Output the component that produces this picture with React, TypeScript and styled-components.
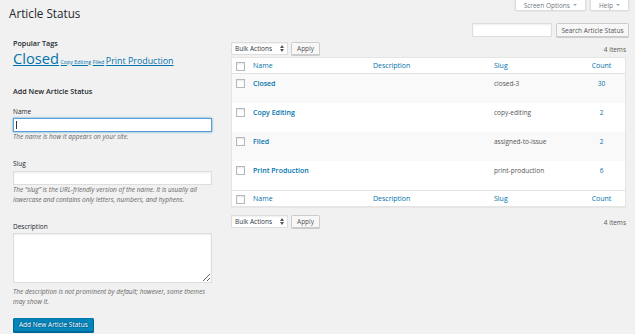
import React from 'react'
import styled, { createGlobalStyle } from 'styled-components'

const GlobalStyle = createGlobalStyle`
  html, body {
    margin: 0;
    padding: 0;
    background: #f1f1f1;
  }
  body {
    width: 635px;
    height: 334px;
    overflow: hidden;
    font-family: "Open Sans", "Liberation Sans", sans-serif;
    font-size: 6.5px;
    line-height: 10px;
    color: #444;
  }
  * {
    box-sizing: border-box;
  }
`

const Wrap = styled.div`
  padding: 0 6px 0 9px;
`

const Header = styled.div`
  display: flex;
  justify-content: space-between;
  align-items: flex-start;
  height: 23px;
`

const Title = styled.h1`
  margin: 0;
  padding-top: 6px;
  font-size: 11.7px;
  line-height: 14px;
  font-weight: 400;
  color: #23282d;
`

const MetaLinks = styled.div`
  display: flex;
  gap: 4px;
`

const MetaTab = styled.div`
  display: flex;
  align-items: center;
  gap: 3px;
  height: 11px;
  padding: 0 8px;
  background: #fff;
  border: 1px solid #ddd;
  border-top: none;
  border-radius: 0 0 2px 2px;
  box-shadow: 0 0 0 1px rgba(0, 0, 0, 0.04);
  color: #72777c;
  line-height: 9px;
`

const TabArrow = styled.span`
  width: 0;
  height: 0;
  border-left: 2px solid transparent;
  border-right: 2px solid transparent;
  border-top: 2.5px solid #a0a5aa;
`

const SearchRow = styled.div`
  display: flex;
  justify-content: flex-end;
  gap: 4px;
  height: 14px;
`

const TextInput = styled.input<{ $width?: number; $focus?: boolean }>`
  display: block;
  width: ${(p) => (p.$width ? `${p.$width}px` : '100%')};
  height: 14px;
  margin: 0;
  padding: 0 3px;
  background: #fff;
  border: 1px solid ${(p) => (p.$focus ? '#5b9dd9' : '#ddd')};
  border-radius: 0;
  box-shadow: ${(p) =>
    p.$focus ? '0 0 2px rgba(30, 140, 190, 0.8)' : 'inset 0 1px 2px rgba(0, 0, 0, 0.07)'};
  font: inherit;
  color: #32373c;
  outline: none;
`

const Button = styled.button<{ $width?: number; $tall?: boolean }>`
  display: inline-flex;
  align-items: center;
  justify-content: center;
  width: ${(p) => (p.$width ? `${p.$width}px` : 'auto')};
  height: ${(p) => (p.$tall ? 14 : 13)}px;
  margin: 0;
  padding: 0 3px;
  background: #f7f7f7;
  border: 1px solid #ccc;
  border-radius: 1.5px;
  box-shadow: 0 1px 0 #ccc;
  font: inherit;
  line-height: 11px;
  white-space: nowrap;
  color: #555;
`

const PrimaryButton = styled(Button)`
  height: 14px;
  padding: 0 5px;
  background: #0085ba;
  border-color: #0073aa #006799 #006799;
  box-shadow: 0 1px 0 #006799;
  color: #fff;
  text-shadow: 0 -1px 1px #006799, 1px 0 1px #006799, 0 1px 1px #006799, -1px 0 1px #006799;
`

const Columns = styled.div`
  display: flex;
`

const LeftCol = styled.div`
  width: 222px;
  padding-left: 4px;
`

const FormBox = styled.div`
  width: 199px;
`

const RightCol = styled.div`
  flex: 1;
  padding-right: 3px;
`

const SectionTitle = styled.h2<{ $top: number }>`
  margin: ${(p) => p.$top}px 0 0;
  font-size: 7.2px;
  line-height: 10px;
  font-weight: 600;
  color: #23282d;
`

const TagCloud = styled.div`
  margin-top: 1.5px;
  line-height: 1.2;
`

const Tag = styled.a<{ $size: number }>`
  font-size: ${(p) => p.$size}px;
  color: #0073aa;
  text-decoration: underline;
  margin-right: 1.5px;
`

const Field = styled.div<{ $gap?: number }>`
  margin-bottom: ${(p) => p.$gap ?? 17}px;
`

const Label = styled.label`
  display: block;
  margin-bottom: 1.3px;
  color: #23282d;
`

const InputWrap = styled.div`
  position: relative;
`

const Caret = styled.span`
  position: absolute;
  left: 3px;
  top: 3px;
  width: 1px;
  height: 8px;
  background: #32373c;
`

const TextArea = styled.textarea`
  display: block;
  width: 100%;
  height: 50px;
  margin: 0;
  padding: 2px 3px;
  background: #fff;
  border: 1px solid #ddd;
  border-radius: 0;
  box-shadow: inset 0 1px 2px rgba(0, 0, 0, 0.07);
  font: inherit;
  resize: both;
  outline: none;
`

const Hint = styled.p<{ $top?: number }>`
  margin: ${(p) => p.$top ?? 0}px 0 0;
  font-style: italic;
  color: #666;
`

const Submit = styled.div`
  margin-top: 11px;
`

const TableNav = styled.div<{ $top: number }>`
  display: flex;
  align-items: flex-start;
  gap: 3px;
  height: ${(p) => (p.$top === 5 ? 20 : 14)}px;
  padding-top: ${(p) => p.$top}px;
`

const Select = styled.div`
  display: flex;
  align-items: center;
  justify-content: space-between;
  width: 57px;
  height: 13px;
  padding: 0 3px;
  background: #fff;
  border: 1px solid #ddd;
  box-shadow: inset 0 1px 2px rgba(0, 0, 0, 0.07);
  color: #32373c;
  line-height: 11px;
`

const ItemCount = styled.span`
  margin-left: auto;
  margin-top: 2.5px;
  color: #555;
`

const Table = styled.table`
  width: 100%;
  table-layout: fixed;
  border-collapse: separate;
  border-spacing: 0;
  background: #fff;
  border: 1px solid #e5e5e5;
  box-shadow: 0 1px 1px rgba(0, 0, 0, 0.04);
`

const HeadCell = styled.th<{ $foot?: boolean; $center?: boolean }>`
  padding: 3px 5px 2px;
  font-size: 7px;
  line-height: 10px;
  font-weight: 400;
  text-align: ${(p) => (p.$center ? 'center' : 'left')};
  color: #0073aa;
  border-${(p) => (p.$foot ? 'top' : 'bottom')}: 1px solid #e1e1e1;
  vertical-align: top;
`

const CheckCell = styled.td`
  padding: 4px 4px 0;
  vertical-align: top;
`

const HeadCheckCell = styled(CheckCell)<{ $foot?: boolean }>`
  padding: 4px 4px 2px;
  border-${(p) => (p.$foot ? 'top' : 'bottom')}: 1px solid #e1e1e1;
`

const Row = styled.tr`
  height: 29px;
  &:nth-child(odd) {
    background: #f9f9f9;
  }
`

const Cell = styled.td<{ $center?: boolean }>`
  padding: 5px 5px 0;
  vertical-align: top;
  text-align: ${(p) => (p.$center ? 'center' : 'left')};
  color: #555;
`

const RowTitle = styled.a`
  font-size: 7px;
  font-weight: 600;
  color: #0073aa;
`

const CountLink = styled.a`
  color: #0073aa;
`

const Checkbox = styled.span<{ $row?: boolean }>`
  display: block;
  width: 9px;
  height: 9px;
  margin-top: ${(p) => (p.$row ? 1 : 0)}px;
  background: #fff;
  border: 1px solid #b4b9be;
  box-shadow: inset 0 1px 2px rgba(0, 0, 0, 0.1);
`

function SelectArrows() {
  return (
    <svg width="4" height="7" viewBox="0 0 4 7">
      <path d="M0 3 L2 0 L4 3 Z M0 4 L2 7 L4 4 Z" fill="#555" />
    </svg>
  )
}

function BulkNav({ top }: { top: number }) {
  return (
    <TableNav $top={top}>
      <Select>
        Bulk Actions
        <SelectArrows />
      </Select>
      <Button $width={29}>Apply</Button>
      <ItemCount>4 items</ItemCount>
    </TableNav>
  )
}

const terms = [
  { name: 'Closed', slug: 'closed-3', count: 30 },
  { name: 'Copy Editing', slug: 'copy-editing', count: 2 },
  { name: 'Filed', slug: 'assigned-to-issue', count: 2 },
  { name: 'Print Production', slug: 'print-production', count: 6 },
]

function HeadRow({ foot }: { foot?: boolean }) {
  return (
    <tr>
      <HeadCheckCell $foot={foot}>
        <Checkbox />
      </HeadCheckCell>
      <HeadCell $foot={foot}>Name</HeadCell>
      <HeadCell $foot={foot}>Description</HeadCell>
      <HeadCell $foot={foot}>Slug</HeadCell>
      <HeadCell $foot={foot} $center>
        Count
      </HeadCell>
    </tr>
  )
}

export default function App() {
  return (
    <>
      <GlobalStyle />
      <Wrap>
        <Header>
          <Title>Article Status</Title>
          <MetaLinks>
            <MetaTab>
              Screen Options <TabArrow />
            </MetaTab>
            <MetaTab>
              Help <TabArrow />
            </MetaTab>
          </MetaLinks>
        </Header>
        <SearchRow>
          <TextInput $width={80} />
          <Button $width={73} $tall>
            Search Article Status
          </Button>
        </SearchRow>
        <Columns>
          <LeftCol>
            <FormBox>
              <SectionTitle $top={1}>Popular Tags</SectionTitle>
              <TagCloud>
                <Tag $size={14.7}>Closed</Tag>
                <Tag $size={5.3}>Copy Editing</Tag>
                <Tag $size={5.3}>Filed</Tag>
                <Tag $size={8.9}>Print Production</Tag>
              </TagCloud>
              <SectionTitle $top={19}>Add New Article Status</SectionTitle>
              <Field style={{ marginTop: 11 }}>
                <Label>Name</Label>
                <InputWrap>
                  <TextInput $focus readOnly />
                  <Caret />
                </InputWrap>
                <Hint>The name is how it appears on your site.</Hint>
              </Field>
              <Field>
                <Label>Slug</Label>
                <TextInput />
                <Hint>
                  The “slug” is the URL-friendly version of the name. It is usually all lowercase
                  and contains only letters, numbers, and hyphens.
                </Hint>
              </Field>
              <Field $gap={0}>
                <Label>Description</Label>
                <TextArea />
                <Hint $top={3.5}>
                  The description is not prominent by default; however, some themes may show it.
                </Hint>
              </Field>
              <Submit>
                <PrimaryButton>Add New Article Status</PrimaryButton>
              </Submit>
            </FormBox>
          </LeftCol>
          <RightCol>
            <BulkNav top={5} />
            <Table>
              <colgroup>
                <col style={{ width: 16 }} />
                <col style={{ width: 120 }} />
                <col style={{ width: 121 }} />
                <col style={{ width: 89 }} />
                <col style={{ width: 47 }} />
              </colgroup>
              <thead>
                <HeadRow />
              </thead>
              <tbody>
                {terms.map((t) => (
                  <Row key={t.slug}>
                    <CheckCell>
                      <Checkbox $row />
                    </CheckCell>
                    <Cell>
                      <RowTitle>{t.name}</RowTitle>
                    </Cell>
                    <Cell />
                    <Cell>{t.slug}</Cell>
                    <Cell $center>
                      <CountLink>{t.count}</CountLink>
                    </Cell>
                  </Row>
                ))}
              </tbody>
              <tfoot>
                <HeadRow foot />
              </tfoot>
            </Table>
            <BulkNav top={8} />
          </RightCol>
        </Columns>
      </Wrap>
    </>
  )
}
